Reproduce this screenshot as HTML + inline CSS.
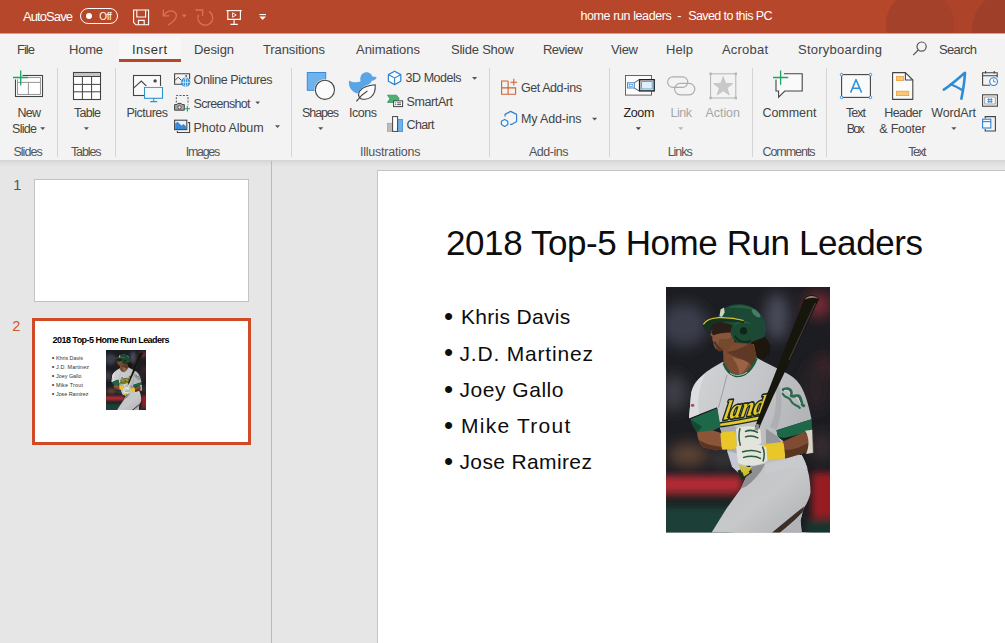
<!DOCTYPE html>
<html lang="en">
<head>
<meta charset="utf-8">
<title>home run leaders - PowerPoint</title>
<style>
html,body{margin:0;padding:0;overflow:hidden;}
body{width:1005px;height:643px;overflow:hidden;position:relative;background:#e6e6e6;font-family:"Liberation Sans",sans-serif;}
.t{position:absolute;white-space:nowrap;display:block;}
.abs{position:absolute;}
#titlebar{left:0;top:0;width:1005px;height:33px;background:#b7472a;overflow:hidden;}
#tabs{left:0;top:33px;width:1005px;height:29px;background:linear-gradient(#d79d8f 0,#d79d8f 1px,#f8f4f5 1px,#f7f4f5 4px,#f3f3f3 6px);}
#ribbon{left:0;top:62px;width:1005px;height:98px;background:#f3f3f3;}
#ribshadow{left:0;top:160px;width:1005px;height:7px;background:linear-gradient(#d3d3d3,#dedede 40%,#e6e6e6);}
.sep{position:absolute;top:68px;width:1px;height:89px;background:#d4d4d4;}
#tabactive{left:119px;top:38px;width:62px;height:21px;background:#f8f7f7;}
#tabline{left:119px;top:59px;width:62px;height:3px;background:#b7472a;}
#panediv{left:271px;top:161px;width:1px;height:483px;background:#bababa;}
#thumb1{left:34px;top:179px;width:213px;height:121px;background:#fff;border:1px solid #c3c3c3;box-sizing:content-box;}
#thumb2{left:32px;top:318px;width:213px;height:121px;background:#fff;border:3px solid #d04a27;}
#slide{left:377px;top:170px;width:627px;height:472px;background:#fff;border-left:1px solid #c4c4c4;border-top:1px solid #c4c4c4;}
.bl{position:absolute;border-radius:50%;background:#0d0d0d;}
svg{position:absolute;overflow:visible;}
</style>
</head>
<body>
<div class="abs" id="titlebar"></div>
<div class="abs" id="tabs"></div>
<div class="abs" id="ribbon"></div>
<div class="abs" id="ribshadow"></div>
<div class="abs" id="tabactive"></div>
<div class="abs" id="tabline"></div>
<div class="sep" style="left:57px"></div>
<div class="sep" style="left:115px"></div>
<div class="sep" style="left:291px"></div>
<div class="sep" style="left:489px"></div>
<div class="sep" style="left:609px"></div>
<div class="sep" style="left:752px"></div>
<div class="sep" style="left:826px"></div>
<div class="abs" id="panediv"></div>
<div class="abs" id="thumb1"></div>
<div class="abs" id="thumb2"></div>
<div class="abs" id="slide"></div>
<!-- ribbon icons group 1: slides, tables, images -->
<svg style="left:0;top:62px" width="300" height="98" viewBox="0 62 300 98" fill="none">
  <!-- New Slide -->
  <rect x="15.5" y="75.5" width="27" height="21" fill="#fdfdfd" stroke="#444" stroke-width="1.1"/>
  <rect x="17.6" y="77.6" width="22.8" height="16.8" fill="#fff" stroke="#8a8a8a" stroke-width="0.9"/>
  <path d="M17.6 82.4 H40.4 M28.4 82.4 V94.4" stroke="#8a8a8a" stroke-width="0.9"/>
  <rect x="12" y="70" width="10.5" height="9.5" fill="#f3f3f3"/>
  <path d="M20.7 70.4 V85.4 M13 77.5 H28" stroke="#1fa463" stroke-width="1.3"/>
  <path d="M40.2 127.2 H45.2 L42.7 129.9 Z" fill="#555"/>
  <!-- Table -->
  <rect x="73.5" y="72.5" width="27" height="27" fill="#fff" stroke="#444" stroke-width="1.1"/>
  <rect x="74" y="73" width="26" height="3.2" fill="#c4c4c4"/>
  <path d="M73.5 76.5 H100.5 M73.5 84.4 H100.5 M73.5 91.8 H100.5 M82.4 76.5 V99.5 M91.6 76.5 V99.5" stroke="#444" stroke-width="1"/>
  <path d="M83.9 127.2 H88.9 L86.4 129.9 Z" fill="#555"/>
  <!-- Pictures -->
  <rect x="133.5" y="75.5" width="27" height="20" fill="#fafafa" stroke="#444" stroke-width="1.1"/>
  <path d="M133.8 87.8 L141.3 81 L146.5 86.2" stroke="#444" stroke-width="1.1"/>
  <circle cx="155.1" cy="80.9" r="1.7" fill="#444"/>
  <rect x="144.5" y="87.3" width="18" height="11" fill="#f4f8fb" stroke="#2f96cc" stroke-width="1.1"/>
  <rect x="143" y="86" width="21" height="1" fill="#f3f3f3" stroke="none"/>
  <path d="M153.7 98.5 V101.6 M150.2 101.6 H157.2" stroke="#2f96cc" stroke-width="1.1"/>
  <!-- Online Pictures -->
  <path d="M182 84.2 H174.6 V73.8 H189.6 V79" stroke="#444" stroke-width="1.1"/>
  <path d="M174.8 80.6 L178.2 77.2 L181 80" stroke="#444" stroke-width="1"/>
  <circle cx="186.2" cy="75.9" r="0.9" fill="#444"/>
  <circle cx="185.6" cy="82.3" r="4.7" fill="#2b8fd6"/>
  <path d="M181.2 82.3 H190 M185.6 77.8 V86.8" stroke="#e8f3fb" stroke-width="0.8"/>
  <ellipse cx="185.6" cy="82.3" rx="2.1" ry="4.4" stroke="#e8f3fb" stroke-width="0.7"/>
  <!-- Screenshot -->
  <path d="M176.3 102.5 V95.5 H188 V104.5" stroke="#555" stroke-width="1" stroke-dasharray="2 1.4"/>
  <path d="M174.6 104.6 H177 L177.8 103.4 H181.2 L182 104.6 H184.3 V110.2 H174.6 Z" fill="#a9a9a9" stroke="#444" stroke-width="1"/>
  <circle cx="179.5" cy="107.3" r="1.7" fill="#e9e9e9" stroke="#444" stroke-width="0.9"/>
  <path d="M187.4 106 V111.4 M184.8 108.7 H190" stroke="#1fa463" stroke-width="1.1"/>
  <path d="M255.4 101.6 H260 L257.7 104.2 Z" fill="#555"/>
  <!-- Photo Album -->
  <path d="M177.4 131 V132.5 H189.6 V122.6 H188" stroke="#444" stroke-width="1.1"/>
  <rect x="174.6" y="120.2" width="12.2" height="9.4" fill="#eaf3fb" stroke="#444" stroke-width="1.1"/>
  <path d="M175.2 123.6 L177.6 121.8 L181.4 125.4 L183.6 124 L186.2 126.4 V129 H175.2 Z" fill="#3b8ad8"/>
  <path d="M275 125.2 H280 L277.5 128 Z" fill="#555"/>
</svg>

<!-- ribbon icons group 2: illustrations, add-ins -->
<svg style="left:295px;top:62px" width="320" height="98" viewBox="295 62 320 98" fill="none">
  <!-- Shapes -->
  <rect x="307.3" y="72.5" width="18.4" height="17.8" fill="#6fb3ec" stroke="#3a8bd8" stroke-width="1"/>
  <circle cx="324.9" cy="89.8" r="10.6" fill="#f3f3f3"/>
  <circle cx="324.9" cy="89.8" r="9.6" fill="#fbfbfb" stroke="#444" stroke-width="1.1"/>
  <path d="M318.1 127.2 H323.3 L320.7 130 Z" fill="#555"/>
  <!-- Icons : duck -->
  <path d="M349 80.4 C352 82.4 356 82.6 360.6 81.4 C359.4 77 361.6 72.4 366.4 72.2 C370.2 72.2 372 74.8 372.4 76.6 L376.6 77 C376.2 79.6 373.8 80.6 371.8 80.8 C371.2 82.6 370 83.6 368.6 84.4 C364 85.6 360 88.6 357.8 93.4 C353 92.6 348 88 349 80.4 Z" fill="#5aa5e6"/>
  <!-- leaf -->
  <path d="M360.2 98.4 C356.6 94 358.6 86.4 375.2 84.8 C376 96 368.8 101.4 360.2 98.4 Z" fill="#fbfbfb" stroke="#444" stroke-width="1.1"/>
  <path d="M356.4 101.4 C359.6 96.8 362.8 93.8 367.4 91" stroke="#444" stroke-width="1.1"/>
  <!-- 3D models cube -->
  <path d="M394.6 71.2 L400.8 74.6 V81.2 L394.6 84.6 L388.4 81.2 V74.6 Z" fill="#fbfdff" stroke="#2f82d2" stroke-width="1.2" stroke-linejoin="round"/>
  <path d="M388.6 74.8 L394.6 78 L400.6 74.8 M394.6 78 V84.4" stroke="#2f82d2" stroke-width="1.1"/>
  <path d="M472 77 H477.2 L474.6 79.8 Z" fill="#555"/>
  <!-- SmartArt -->
  <path d="M387.4 95.2 H396.6 L399.2 98.8 L396.6 102.4 H387.4 L390 98.8 Z" fill="#4fae72" stroke="#2f9658" stroke-width="0.8"/>
  <rect x="393.6" y="100.8" width="9" height="5.8" fill="#fbfbfb" stroke="#444" stroke-width="1"/>
  <path d="M395.2 102.8 H396.2 M397.2 102.8 H401 M395.2 104.6 H396.2 M397.2 104.6 H401" stroke="#444" stroke-width="0.9"/>
  <!-- Chart -->
  <rect x="387.4" y="123.2" width="5" height="8.2" fill="#bdbdbd" stroke="#9a9a9a" stroke-width="0.6"/>
  <rect x="397.6" y="119.6" width="5" height="11.8" fill="#6fb3ec" stroke="#3a8bd8" stroke-width="0.8"/>
  <rect x="392.6" y="116.6" width="5" height="14.8" fill="#fdfdfd" stroke="#444" stroke-width="1"/>
</svg>

<!-- ribbon icons group 3: add-ins, links, comments, text -->
<svg style="left:495px;top:62px" width="510" height="98" viewBox="495 62 510 98" fill="none">
  <!-- Get Add-ins -->
  <path d="M508.1 81 H501.6 V94.3 H515.6 V87.9 H501.6 M508.1 81 V94.3" stroke="#d4602f" stroke-width="1.1"/>
  <path d="M513.8 78.8 V85.6 M510.4 82.2 H517.2" stroke="#d4602f" stroke-width="1.1"/>
  <!-- My Add-ins -->
  <path d="M505 116.4 V114.4 L510.6 111.4 L516.6 114.4 V121.6 L511.6 124.4 H510" stroke="#2f82d2" stroke-width="1.2" stroke-linejoin="round"/>
  <path d="M504.6 119.4 L507.8 121.2 V124.6 L504.6 126.4 L501.4 124.6 V121.2 Z" stroke="#2f82d2" stroke-width="1.2" stroke-linejoin="round" fill="#f7fbff"/>
  <path d="M592 117.8 H597.2 L594.6 120.6 Z" fill="#555"/>
  <!-- Zoom -->
  <rect x="625.5" y="75.5" width="26" height="19.6" fill="#fbfbfb" stroke="#555" stroke-width="0.9"/>
  <path d="M634.3 82.8 L639.2 79.6 M634.3 88 L639.2 91" stroke="#444" stroke-width="0.9"/>
  <rect x="627.5" y="82.8" width="6.8" height="5.2" fill="#e4f2fb" stroke="#2f82d2" stroke-width="0.9"/>
  <rect x="629.2" y="84.4" width="3.4" height="2" fill="#fff" stroke="#2f82d2" stroke-width="0.6"/>
  <rect x="639.6" y="79.7" width="14.6" height="11.2" fill="#fbfbfb" stroke="#222" stroke-width="1.4"/>
  <rect x="641.6" y="81.6" width="10.6" height="7.4" fill="#dff0fb" stroke="#3a93d6" stroke-width="0.8"/>
  <path d="M635.8 127.2 H641 L638.4 130 Z" fill="#444"/>
  <!-- Link -->
  <rect x="667.6" y="76.8" width="20.2" height="10.6" rx="5.3" stroke="#adadad" stroke-width="1.2"/>
  <rect x="674.6" y="83.4" width="20.2" height="11.4" rx="5.7" stroke="#adadad" stroke-width="1.2" fill="none"/>
  <path d="M678.2 127.2 H683.4 L680.8 130 Z" fill="#b5b5b5"/>
  <!-- Action -->
  <rect x="710.6" y="73.8" width="25.2" height="24.2" stroke="#b3b3b3" stroke-width="1"/>
  <g fill="#b3b3b3"><rect x="709.4" y="72.6" width="2.4" height="2.4"/><rect x="734.6" y="72.6" width="2.4" height="2.4"/><rect x="709.4" y="96.8" width="2.4" height="2.4"/><rect x="734.6" y="96.8" width="2.4" height="2.4"/></g>
  <path d="M723.2 76.6 L725.6 83.4 L732.8 83.6 L727.1 88 L729.2 94.9 L723.2 90.8 L717.2 94.9 L719.3 88 L713.6 83.6 L720.8 83.4 Z" fill="#c9c9c9" stroke="#b9b9b9" stroke-width="0.6"/>
  <!-- Comment -->
  <path d="M776 73.8 H802.2 V91 H784.8 L778.6 97.2 V91 H776 Z" fill="#fafafa" stroke="#444" stroke-width="1.1"/>
  <rect x="772" y="70" width="12" height="9.6" fill="#f3f3f3"/>
  <path d="M780.6 70.4 V84.8 M773 77.5 H788.2" stroke="#1fa463" stroke-width="1.3"/>
  <!-- Text Box -->
  <rect x="841.6" y="74.6" width="28.8" height="22.8" fill="#fafafa" stroke="#444" stroke-width="1.1"/>
  <g fill="#fff" stroke="#2f82d2" stroke-width="0.9"><circle cx="841.6" cy="74.6" r="1.3"/><circle cx="870.4" cy="74.6" r="1.3"/><circle cx="841.6" cy="97.4" r="1.3"/><circle cx="870.4" cy="97.4" r="1.3"/></g>
  <path d="M850.6 92.6 L856 79.6 L861.6 92.6 M852.6 88.2 H859.6" stroke="#2f8fd8" stroke-width="1.5" stroke-linejoin="round"/>
  <!-- Header & Footer -->
  <path d="M892.6 72.6 H905.4 L912.8 80 V99.4 H892.6 Z" fill="#fbfbfb" stroke="#444" stroke-width="1.1" stroke-linejoin="round"/>
  <path d="M905.4 72.6 V80 H912.8" stroke="#444" stroke-width="1.1"/>
  <rect x="896.4" y="76.4" width="7" height="4.2" fill="#fac775" stroke="#ee9f3c" stroke-width="0.8"/>
  <rect x="896.4" y="91.2" width="12.4" height="4.4" fill="#fac775" stroke="#ee9f3c" stroke-width="0.8"/>
  <!-- WordArt -->
  <path d="M943.8 89.6 C950 86 961 76 965 72.8 C964.6 80 962.8 92 961.4 98.8" stroke="#2b8dd6" stroke-width="2.6" stroke-linecap="round" stroke-linejoin="round"/>
  <path d="M950.8 84.2 C955 86 959 88 962.6 90.2" stroke="#2b8dd6" stroke-width="2.3" stroke-linecap="round"/>
  <path d="M951.3 127.2 H956.5 L953.9 130 Z" fill="#555"/>
  <!-- Date & time -->
  <path d="M990 85.2 H982.6 V72.8 H997.2 V77.4" stroke="#444" stroke-width="1.1"/>
  <path d="M982.6 75.8 H997.2 M985.6 71 V73.4 M994.2 71 V73.4" stroke="#444" stroke-width="1.1"/>
  <circle cx="993.6" cy="81.6" r="3.9" fill="#f7fbff" stroke="#2f82d2" stroke-width="1.1"/>
  <path d="M993.6 79.4 V81.8 H995.6" stroke="#2f82d2" stroke-width="0.9"/>
  <!-- Slide number -->
  <rect x="982.6" y="94.8" width="14.8" height="11.4" fill="#fafafa" stroke="#444" stroke-width="1.1"/>
  <rect x="984.8" y="97" width="10.4" height="7" fill="#fff" stroke="#777" stroke-width="0.7"/>
  <path d="M988.8 98.2 V103 M991.2 98.2 V103 M987.4 99.6 H992.6 M987.4 101.6 H992.6" stroke="#2f82d2" stroke-width="0.9"/>
  <!-- Object -->
  <path d="M985.2 118.6 V116.6 H995.4 V131 H985.2 V129" stroke="#444" stroke-width="1.1"/>
  <rect x="982.6" y="119.2" width="8.2" height="8.8" fill="#f7fbff" stroke="#2f82d2" stroke-width="1.1"/>
  <path d="M982.6 121.6 H990.8" stroke="#2f82d2" stroke-width="1.1"/>
</svg>
<!-- search icon -->
<svg style="left:911px;top:40px" width="18" height="18" viewBox="0 0 18 18" fill="none" stroke="#555" stroke-width="1.2">
  <circle cx="10.6" cy="6.6" r="4.6"/>
  <path d="M7.2 10 L2.2 15.2"/>
</svg>

<!-- title bar icons -->
<div class="abs" style="left:80px;top:8px;width:36px;height:14px;border:1.3px solid #fff;border-radius:9px;"></div>
<div class="abs" style="left:85.5px;top:13px;width:6px;height:6px;border-radius:3px;background:#fff;"></div>
<svg style="left:133px;top:9px" width="17" height="17" viewBox="0 0 17 17" fill="none" stroke="#fff" stroke-width="1.1">
  <path d="M0.6 1 H15.6 V15.8 H3 L0.6 13.4 Z"/>
  <path d="M3.8 1 V8 H12.6 V1"/>
  <path d="M5.4 15.8 V11.4 H11.2 V15.8"/>
</svg>
<svg style="left:158px;top:4px" width="60" height="26" viewBox="158 4 60 26" fill="none" stroke="#e26f52" stroke-width="1.3">
  <path d="M163.3 9.4 V15.8 H169.6"/>
  <path d="M163.8 15.4 C166 11.6 170 9.8 173.4 11.4 C177.4 13.4 177.4 17.6 173.4 21 L168.2 25.2"/>
  <path d="M181.6 14.6 H186.8 L184.2 17.4 Z" fill="#e26f52" stroke="none"/>
  <path d="M195.4 10 H202.6 V16"/>
  <path d="M209 11.4 A7.4 7.4 0 1 1 198.6 14.6"/>
</svg>
<svg style="left:226px;top:9px" width="17" height="17" viewBox="0 0 17 17" fill="none" stroke="#fff" stroke-width="1.1">
  <path d="M0.4 1.6 H15.8"/>
  <path d="M1.8 1.6 V10.4 H14.4 V1.6"/>
  <path d="M8.1 10.4 V15.4 M4.4 15.4 H11.8"/>
  <path d="M6.6 3.8 L10.2 6 L6.6 8.2 Z" stroke-width="0.9"/>
</svg>
<svg style="left:259px;top:13px" width="8" height="8" viewBox="0 0 8 8">
  <rect x="0.4" y="1" width="6.6" height="1.1" fill="#fff"/>
  <path d="M0.4 3.6 H7 L3.7 7 Z" fill="#fff"/>
</svg>
<!-- title decoration -->
<div class="abs" style="left:860px;top:0;width:145px;height:33px;overflow:hidden;">
<svg style="left:0;top:0" width="145" height="33" viewBox="860 0 145 33">
  <circle cx="975" cy="-10" r="62" fill="#ad442a"/>
  <circle cx="920" cy="24" r="34" fill="#a3412a"/>
  <circle cx="1012" cy="30" r="40" fill="#9f3f29"/>
</svg>
</div>


<!-- photo (drawn with vector shapes) -->
<svg style="left:666px;top:287px" width="164" height="245.5" viewBox="0 0 164 246" preserveAspectRatio="none">
  <defs>
    <filter id="bl8" x="-50%" y="-50%" width="200%" height="200%"><feGaussianBlur stdDeviation="7"/></filter>
    <filter id="bl4" x="-50%" y="-50%" width="200%" height="200%"><feGaussianBlur stdDeviation="3.5"/></filter>
    <filter id="bl1" x="-20%" y="-20%" width="140%" height="140%"><feGaussianBlur stdDeviation="0.7"/></filter>
    <filter id="bl2" x="-20%" y="-20%" width="140%" height="140%"><feGaussianBlur stdDeviation="1.6"/></filter>
    <linearGradient id="jer" x1="0" y1="0" x2="1" y2="0.3">
      <stop offset="0" stop-color="#d2d3d5"/><stop offset="0.55" stop-color="#c6c7ca"/><stop offset="1" stop-color="#b4b5b9"/>
    </linearGradient>
    <linearGradient id="pan" x1="0" y1="0" x2="1" y2="1">
      <stop offset="0" stop-color="#bfc0c3"/><stop offset="0.55" stop-color="#c7c8ca"/><stop offset="1" stop-color="#aeafb2"/>
    </linearGradient>
    <clipPath id="pc"><rect x="0" y="0" width="164" height="246"/></clipPath>
  </defs>
<g clip-path="url(#pc)">
      <rect x="0" y="0" width="164" height="246" fill="#1c1d22"/>
      <!-- blurred background -->
      <g filter="url(#bl8)">
        <ellipse cx="18" cy="38" rx="24" ry="22" fill="#3b3e4b"/>
        <ellipse cx="111" cy="30" rx="12" ry="24" fill="#4a4c5a"/>
        <ellipse cx="152" cy="18" rx="14" ry="12" fill="#7a2a34"/>
        <ellipse cx="158" cy="82" rx="10" ry="14" fill="#4a242b"/>
        <ellipse cx="8" cy="106" rx="14" ry="18" fill="#3c3e47"/>
        <ellipse cx="150" cy="100" rx="14" ry="25" fill="#2c2327"/>
        <ellipse cx="22" cy="168" rx="20" ry="12" fill="#5c4335"/>
        <ellipse cx="58" cy="172" rx="12" ry="9" fill="#3d3a3c"/>
        <ellipse cx="156" cy="160" rx="10" ry="14" fill="#3a2d30"/>
      </g>
      <g filter="url(#bl4)">
        <rect x="-10" y="189" width="86" height="17" fill="#b02c35"/>
        <rect x="-10" y="207" width="80" height="12" fill="#1a2422"/>
        <rect x="-10" y="221" width="74" height="34" fill="#1f4038"/>
        <rect x="146" y="186" width="30" height="46" fill="#961a24"/>
        <rect x="140" y="234" width="34" height="20" fill="#14362e"/>
      </g>
      <g filter="url(#bl1)">
      <!-- hair -->
      <path d="M82 47 C92 45 101 49 103.5 58 C105.5 65 102 71 96 71.5 C91 70 87 66 85 60 Z" fill="#1b120d"/>
      <!-- neck -->
      <path d="M57 62 L57.6 77 C61 88 76 93 86 81 L91 72.5 L88 57 L66 55 Z" fill="#7d4c33"/>
      <path d="M66 70 C70 76 74 82 73 88 C78 86 82 80 84 72 C78 74 72 73 66 70 Z" fill="#9a6445"/>
      <path d="M60 65 C70 64 78 60 84 56 L88 58 L90.6 72 L86 79 C80 72 68 71 60 65 Z" fill="#5e3826"/>
      <!-- face -->
      <path d="M50 37 L46 43 L44.3 47.8 L46.4 50 L46.2 52.5 L47.2 54.5 L47.6 58 L49.5 61.5 L53.5 64.5 L62 63 L68 57 L69 38 Z" fill="#87563b"/>
      <path d="M44 36 L70 34 L69 46 C62 45 54 46 47.5 48.4 L45.4 46 L46.4 43 Z" fill="#2c1b15"/>
      <path d="M53 52 C58 53 63 52 67 50 L68 57 L62 63 L54 64.5 L50 62 C52 59 53 56 53 52 Z" fill="#75482f"/>
      <path d="M47.4 55 C49 58 50 60.6 53.6 64.4 L58 63.6 C54 61 51 58 49.6 54.4 Z" fill="#553526"/>
      <!-- helmet -->
      <path d="M51 34 C52 23 62 17 74 17.3 C88 17.5 99.5 28 100 42 C100 46 99 49 97.5 50.5 C92 52.5 88 54 84 56 L70 50 L66 38 Z" fill="#1b4a34"/>
      <path d="M62 21 C70 16.5 84 17.5 92 25 C86 21.5 72 20.5 62 21 Z" fill="#296043"/>
      <ellipse cx="90" cy="26.5" rx="5.5" ry="2.4" transform="rotate(42 90 26.5)" fill="#5d927a" opacity="0.7"/>
      <circle cx="76.5" cy="44.8" r="11.8" fill="#1b4833"/>
      <path d="M66.5 39 C70 33.5 80 32.5 85.5 37.5 C80 35 71 35.5 66.5 39 Z" fill="#2f6a4c"/>
      <circle cx="77.5" cy="44" r="3.6" fill="#0d2519"/>
      <path d="M69 49 C71 54 78 57 85 53.5" stroke="#0f2c1e" stroke-width="1.6" fill="none"/>
      <!-- brim -->
      <path d="M37 38.2 C38 34 44 31 52 30.4 C60 30 70 31 78 33.6 L78 36.4 C68 34.4 58 34.4 50.5 36.2 C45.5 38 42.4 42 43.6 46.6 C40 44.4 36.8 41.4 37 38.2 Z" fill="#123121"/>
      <path d="M37.4 37.4 C40 33.2 46 31 53 30.7 C62 30.4 70 31.4 77.6 33.6" stroke="#d9c431" stroke-width="1.2" fill="none"/>
      <path d="M54.5 22.5 L58 20.6 L58.6 25.6 L56 30 L53.6 29.4 Z" fill="#cfd5bd"/>
      <!-- jersey torso -->
      <path d="M57 75 C50 79 42 83 36 89 C30 94 26 100 25 108 L23 131.5 L51 120.5 L54 141 L62 165 L72 182 L118 176 L136 170 L112 150 L110.5 143.5 L145.5 132.5 C143 120 140 108 134 98 C130 92 124 88 118 85 L90.5 71 C86 82 76 92 68 89.4 C63 87 60 82 57 75 Z" fill="url(#jer)"/>
      <path d="M40 86 C32 92 26 100 25 108 L23 131.5 L33 127.5 C31 114 33 98 40 86 Z" fill="#dcdddf"/>
      <path d="M100 142 L112 150 L124 170 L100 168 Z" fill="#96979b"/>
      <path d="M54 141 L62 165 L72 182 L88 178 L84 150 L66 138 Z" fill="#a9aaae"/>
      <path d="M112 96 C118 110 116 130 110.5 143.5 L104 140 C110 128 112 110 108 96 Z" fill="#aeafb3"/>
      <path d="M61 88 C58 100 55 112 52.4 121" stroke="#a4a5a9" stroke-width="1.2" fill="none"/>
      <!-- collar -->
      <path d="M57.6 76.4 C60 82.4 64 87.6 69.4 89 C76 90 82 86 85.4 81 C87.6 78 89.4 74.6 90.4 71.6" stroke="#1d5a3c" stroke-width="2.6" fill="none"/>
      <path d="M64 86 C68 89.4 75 89.6 81 85.4" stroke="#dfe3df" stroke-width="0.8" fill="none"/>
      <!-- sleeve patch -->
      <g transform="rotate(36 127 110)" fill="none" stroke="#2e6a4d" stroke-linecap="round">
        <path d="M115 110 C118 105 122 105 124 109 C126 113 129 105 132 106 C136 107 138 112 141 111" stroke-width="3"/>
        <path d="M117 113.6 C121 116 125 112 128 114.6 C132 117 136 114 139 115" stroke-width="2.2"/>
        <path d="M116.4 110 C119 107 121.4 107.4 123 110 M130 108.4 C133 108 135 110.4 137 111" stroke="#d5dad6" stroke-width="1"/>
      </g>
      <circle cx="26.6" cy="118.6" r="1.7" fill="#b8475a"/>
      <!-- chest script -->
      <path d="M55 138 C68 136.4 80 134 92 131.4" fill="none" stroke="#1a2a1b" stroke-width="5.4" stroke-linecap="round"/>
      <path d="M55 138 C68 136.4 80 134 92 131.4" fill="none" stroke="#e3c832" stroke-width="2.6" stroke-linecap="round"/>
      <text x="57" y="133" transform="translate(57 133) rotate(-9) skewX(-20) translate(-57 -133)" style="font-family:'Liberation Serif',serif;font-style:italic;font-weight:bold;font-size:26px" textLength="41" lengthAdjust="spacingAndGlyphs" fill="#e3c832" stroke="#1a2a1b" stroke-width="3.4" paint-order="stroke" stroke-linejoin="round">land</text>
      <!-- pants -->
      <path d="M85 179 L118 172 L135.5 168 C141 178 144.5 190 144.5 206 C143 214 139 220 137.5 222 L134.5 234 L135.5 247 L45 247 L60.5 222 L75 202 Z" fill="url(#pan)"/>
      <path d="M138 220 C128 228 116 238 105 247 L113 247 C122 240 131 232 136.4 226 Z" fill="#3b2d27"/>
      <path d="M136.4 226 C131 232 122 240 113 247 L136 247 L134.5 234 Z" fill="#b2b3b6"/>
      <path d="M98 178 C110 176 124 172 135.5 168 C138 172 140 177 141.6 182 C128 180 112 182 100 188 Z" fill="#c9cacd"/>
      <path d="M85 180 L99 177 C96 184 90 192 80 200 L75 202 Z" fill="#8e8f93"/>
      <!-- jersey tail + belt -->
      <path d="M61 164 L80 169 L80 184 L72 186 L66 180 Z" fill="#c4c8d6"/>
      <path d="M71.5 184 L84 178.6 L86 186 L75.6 193.4 Z" fill="#222d1e"/>
      <path d="M76 184.4 L82 181.6 L83.4 186.4 L78 190 Z" fill="#d3ba2e"/>
      <!-- bat -->
      <path d="M138 13 C138.6 8 150 6.4 152.6 11.4 L152.6 13 L123.3 76 L107.4 109 L95 137 L89.4 152 L85 152 L90.2 137 L100.4 109 L113.3 76 Z" fill="#16130f"/>
      <path d="M139 12.6 C140 8.6 149.6 7.4 152 11.6 C148 10 143 10.6 139 12.6 Z" fill="#8a8272"/>
      <path d="M149.4 16 L123 73" stroke="#3b3731" stroke-width="1.4" fill="none"/>
      <!-- left arm (viewer left) -->
      <path d="M24.5 132.5 L51.3 121.5 L54.6 140.4 L46 144.4 L31 145.8 Z" fill="#1e6848"/>
      <path d="M24.5 132.5 L26 138 L31 145.8 L36 140 Z" fill="#154a33"/>
      <path d="M31 145.6 L46 143.6 L56 146.6 L57.6 163 L50 163.6 L37 160.6 C33 156 31 150 31 145.6 Z" fill="#8a5538"/>
      <path d="M33 153 C40 158 50 160 57.4 160 L57.6 163 L50 163.6 L37 160.6 Z" fill="#5c3624"/>
      <rect x="55" y="145" width="15.4" height="17.6" rx="2.4" transform="rotate(-5 62 154)" fill="#e9c62b"/>
      <!-- right arm -->
      <path d="M110.5 143.5 L145.5 132.5 L146.4 146 L138 146.4 L118 151.4 L112 150 Z" fill="#1e6848"/>
      <path d="M116 155.4 L138 145.4 L143.4 150 L142 165 L119.4 171.8 Z" fill="#7f4b31"/>
      <path d="M118 163 C126 164 136 160 142.6 156 L142 165 L119.4 171.8 Z" fill="#5a3423"/>
      <path d="M139 144 L146.6 143 L147.4 166 L140 167.4 C143.4 160 143.6 151 139 144 Z" fill="#d9d3c5"/>
      <path d="M146.6 143 L147.4 166" stroke="#3a3a36" stroke-width="0.8"/>
      <rect x="97.6" y="156.4" width="21" height="16.4" rx="2.4" transform="rotate(-7 108 165)" fill="#e9c62b"/>
      <!-- gloves -->
      <path d="M70 142.4 C76 138.6 88 138.6 94.4 142.6 L95.4 156.4 C90 160.4 78 161.4 71 160 Z" fill="#e3e4dc"/>
      <path d="M70 160 C80 156.6 94 156.6 100.4 160.6 L101.4 174 C94 179.4 80 180.4 72 176 Z" fill="#e3e4dc"/>
      <g stroke="#2b5a3a" stroke-width="1.5" fill="none">
        <path d="M74 141.6 C72.6 147 72.6 153 74.4 159"/>
        <path d="M79 145 C83 143 88 143.6 92 146"/>
        <path d="M79 150.4 C83 148.6 88 149 92.4 151.4"/>
        <path d="M76 165.4 C82 163 90 163.4 95 166"/>
        <path d="M77 171 C83 169 90 169.4 95 172"/>
        <path d="M96.4 160 C98.4 164 98.6 170 97 175"/>
      </g>
      <path d="M88.4 143 L90.4 137 L93.6 138 L92 144 Z" fill="#8c8e90"/>
      <path d="M72 176 C74 179 80 181 86 180 L84 184 L75.6 186 Z" fill="#cfc23a"/>
      </g>
    </g>

</svg>
<!-- thumbnail photo -->
<svg style="left:106px;top:350px" width="40" height="60" viewBox="0 0 164 246" preserveAspectRatio="none">
<g clip-path="url(#pc)">
      <rect x="0" y="0" width="164" height="246" fill="#1c1d22"/>
      <!-- blurred background -->
      <g filter="url(#bl8)">
        <ellipse cx="18" cy="38" rx="24" ry="22" fill="#3b3e4b"/>
        <ellipse cx="111" cy="30" rx="12" ry="24" fill="#4a4c5a"/>
        <ellipse cx="152" cy="18" rx="14" ry="12" fill="#7a2a34"/>
        <ellipse cx="158" cy="82" rx="10" ry="14" fill="#4a242b"/>
        <ellipse cx="8" cy="106" rx="14" ry="18" fill="#3c3e47"/>
        <ellipse cx="150" cy="100" rx="14" ry="25" fill="#2c2327"/>
        <ellipse cx="22" cy="168" rx="20" ry="12" fill="#5c4335"/>
        <ellipse cx="58" cy="172" rx="12" ry="9" fill="#3d3a3c"/>
        <ellipse cx="156" cy="160" rx="10" ry="14" fill="#3a2d30"/>
      </g>
      <g filter="url(#bl4)">
        <rect x="-10" y="189" width="86" height="17" fill="#b02c35"/>
        <rect x="-10" y="207" width="80" height="12" fill="#1a2422"/>
        <rect x="-10" y="221" width="74" height="34" fill="#1f4038"/>
        <rect x="146" y="186" width="30" height="46" fill="#961a24"/>
        <rect x="140" y="234" width="34" height="20" fill="#14362e"/>
      </g>
      <g filter="url(#bl1)">
      <!-- hair -->
      <path d="M82 47 C92 45 101 49 103.5 58 C105.5 65 102 71 96 71.5 C91 70 87 66 85 60 Z" fill="#1b120d"/>
      <!-- neck -->
      <path d="M57 62 L57.6 77 C61 88 76 93 86 81 L91 72.5 L88 57 L66 55 Z" fill="#7d4c33"/>
      <path d="M66 70 C70 76 74 82 73 88 C78 86 82 80 84 72 C78 74 72 73 66 70 Z" fill="#9a6445"/>
      <path d="M60 65 C70 64 78 60 84 56 L88 58 L90.6 72 L86 79 C80 72 68 71 60 65 Z" fill="#5e3826"/>
      <!-- face -->
      <path d="M50 37 L46 43 L44.3 47.8 L46.4 50 L46.2 52.5 L47.2 54.5 L47.6 58 L49.5 61.5 L53.5 64.5 L62 63 L68 57 L69 38 Z" fill="#87563b"/>
      <path d="M44 36 L70 34 L69 46 C62 45 54 46 47.5 48.4 L45.4 46 L46.4 43 Z" fill="#2c1b15"/>
      <path d="M53 52 C58 53 63 52 67 50 L68 57 L62 63 L54 64.5 L50 62 C52 59 53 56 53 52 Z" fill="#75482f"/>
      <path d="M47.4 55 C49 58 50 60.6 53.6 64.4 L58 63.6 C54 61 51 58 49.6 54.4 Z" fill="#553526"/>
      <!-- helmet -->
      <path d="M51 34 C52 23 62 17 74 17.3 C88 17.5 99.5 28 100 42 C100 46 99 49 97.5 50.5 C92 52.5 88 54 84 56 L70 50 L66 38 Z" fill="#1b4a34"/>
      <path d="M62 21 C70 16.5 84 17.5 92 25 C86 21.5 72 20.5 62 21 Z" fill="#296043"/>
      <ellipse cx="90" cy="26.5" rx="5.5" ry="2.4" transform="rotate(42 90 26.5)" fill="#5d927a" opacity="0.7"/>
      <circle cx="76.5" cy="44.8" r="11.8" fill="#1b4833"/>
      <path d="M66.5 39 C70 33.5 80 32.5 85.5 37.5 C80 35 71 35.5 66.5 39 Z" fill="#2f6a4c"/>
      <circle cx="77.5" cy="44" r="3.6" fill="#0d2519"/>
      <path d="M69 49 C71 54 78 57 85 53.5" stroke="#0f2c1e" stroke-width="1.6" fill="none"/>
      <!-- brim -->
      <path d="M37 38.2 C38 34 44 31 52 30.4 C60 30 70 31 78 33.6 L78 36.4 C68 34.4 58 34.4 50.5 36.2 C45.5 38 42.4 42 43.6 46.6 C40 44.4 36.8 41.4 37 38.2 Z" fill="#123121"/>
      <path d="M37.4 37.4 C40 33.2 46 31 53 30.7 C62 30.4 70 31.4 77.6 33.6" stroke="#d9c431" stroke-width="1.2" fill="none"/>
      <path d="M54.5 22.5 L58 20.6 L58.6 25.6 L56 30 L53.6 29.4 Z" fill="#cfd5bd"/>
      <!-- jersey torso -->
      <path d="M57 75 C50 79 42 83 36 89 C30 94 26 100 25 108 L23 131.5 L51 120.5 L54 141 L62 165 L72 182 L118 176 L136 170 L112 150 L110.5 143.5 L145.5 132.5 C143 120 140 108 134 98 C130 92 124 88 118 85 L90.5 71 C86 82 76 92 68 89.4 C63 87 60 82 57 75 Z" fill="url(#jer)"/>
      <path d="M40 86 C32 92 26 100 25 108 L23 131.5 L33 127.5 C31 114 33 98 40 86 Z" fill="#dcdddf"/>
      <path d="M100 142 L112 150 L124 170 L100 168 Z" fill="#96979b"/>
      <path d="M54 141 L62 165 L72 182 L88 178 L84 150 L66 138 Z" fill="#a9aaae"/>
      <path d="M112 96 C118 110 116 130 110.5 143.5 L104 140 C110 128 112 110 108 96 Z" fill="#aeafb3"/>
      <path d="M61 88 C58 100 55 112 52.4 121" stroke="#a4a5a9" stroke-width="1.2" fill="none"/>
      <!-- collar -->
      <path d="M57.6 76.4 C60 82.4 64 87.6 69.4 89 C76 90 82 86 85.4 81 C87.6 78 89.4 74.6 90.4 71.6" stroke="#1d5a3c" stroke-width="2.6" fill="none"/>
      <path d="M64 86 C68 89.4 75 89.6 81 85.4" stroke="#dfe3df" stroke-width="0.8" fill="none"/>
      <!-- sleeve patch -->
      <g transform="rotate(36 127 110)" fill="none" stroke="#2e6a4d" stroke-linecap="round">
        <path d="M115 110 C118 105 122 105 124 109 C126 113 129 105 132 106 C136 107 138 112 141 111" stroke-width="3"/>
        <path d="M117 113.6 C121 116 125 112 128 114.6 C132 117 136 114 139 115" stroke-width="2.2"/>
        <path d="M116.4 110 C119 107 121.4 107.4 123 110 M130 108.4 C133 108 135 110.4 137 111" stroke="#d5dad6" stroke-width="1"/>
      </g>
      <circle cx="26.6" cy="118.6" r="1.7" fill="#b8475a"/>
      <!-- chest script -->
      <path d="M55 138 C68 136.4 80 134 92 131.4" fill="none" stroke="#1a2a1b" stroke-width="5.4" stroke-linecap="round"/>
      <path d="M55 138 C68 136.4 80 134 92 131.4" fill="none" stroke="#e3c832" stroke-width="2.6" stroke-linecap="round"/>
      <text x="57" y="133" transform="translate(57 133) rotate(-9) skewX(-20) translate(-57 -133)" style="font-family:'Liberation Serif',serif;font-style:italic;font-weight:bold;font-size:26px" textLength="41" lengthAdjust="spacingAndGlyphs" fill="#e3c832" stroke="#1a2a1b" stroke-width="3.4" paint-order="stroke" stroke-linejoin="round">land</text>
      <!-- pants -->
      <path d="M85 179 L118 172 L135.5 168 C141 178 144.5 190 144.5 206 C143 214 139 220 137.5 222 L134.5 234 L135.5 247 L45 247 L60.5 222 L75 202 Z" fill="url(#pan)"/>
      <path d="M138 220 C128 228 116 238 105 247 L113 247 C122 240 131 232 136.4 226 Z" fill="#3b2d27"/>
      <path d="M136.4 226 C131 232 122 240 113 247 L136 247 L134.5 234 Z" fill="#b2b3b6"/>
      <path d="M98 178 C110 176 124 172 135.5 168 C138 172 140 177 141.6 182 C128 180 112 182 100 188 Z" fill="#c9cacd"/>
      <path d="M85 180 L99 177 C96 184 90 192 80 200 L75 202 Z" fill="#8e8f93"/>
      <!-- jersey tail + belt -->
      <path d="M61 164 L80 169 L80 184 L72 186 L66 180 Z" fill="#c4c8d6"/>
      <path d="M71.5 184 L84 178.6 L86 186 L75.6 193.4 Z" fill="#222d1e"/>
      <path d="M76 184.4 L82 181.6 L83.4 186.4 L78 190 Z" fill="#d3ba2e"/>
      <!-- bat -->
      <path d="M138 13 C138.6 8 150 6.4 152.6 11.4 L152.6 13 L123.3 76 L107.4 109 L95 137 L89.4 152 L85 152 L90.2 137 L100.4 109 L113.3 76 Z" fill="#16130f"/>
      <path d="M139 12.6 C140 8.6 149.6 7.4 152 11.6 C148 10 143 10.6 139 12.6 Z" fill="#8a8272"/>
      <path d="M149.4 16 L123 73" stroke="#3b3731" stroke-width="1.4" fill="none"/>
      <!-- left arm (viewer left) -->
      <path d="M24.5 132.5 L51.3 121.5 L54.6 140.4 L46 144.4 L31 145.8 Z" fill="#1e6848"/>
      <path d="M24.5 132.5 L26 138 L31 145.8 L36 140 Z" fill="#154a33"/>
      <path d="M31 145.6 L46 143.6 L56 146.6 L57.6 163 L50 163.6 L37 160.6 C33 156 31 150 31 145.6 Z" fill="#8a5538"/>
      <path d="M33 153 C40 158 50 160 57.4 160 L57.6 163 L50 163.6 L37 160.6 Z" fill="#5c3624"/>
      <rect x="55" y="145" width="15.4" height="17.6" rx="2.4" transform="rotate(-5 62 154)" fill="#e9c62b"/>
      <!-- right arm -->
      <path d="M110.5 143.5 L145.5 132.5 L146.4 146 L138 146.4 L118 151.4 L112 150 Z" fill="#1e6848"/>
      <path d="M116 155.4 L138 145.4 L143.4 150 L142 165 L119.4 171.8 Z" fill="#7f4b31"/>
      <path d="M118 163 C126 164 136 160 142.6 156 L142 165 L119.4 171.8 Z" fill="#5a3423"/>
      <path d="M139 144 L146.6 143 L147.4 166 L140 167.4 C143.4 160 143.6 151 139 144 Z" fill="#d9d3c5"/>
      <path d="M146.6 143 L147.4 166" stroke="#3a3a36" stroke-width="0.8"/>
      <rect x="97.6" y="156.4" width="21" height="16.4" rx="2.4" transform="rotate(-7 108 165)" fill="#e9c62b"/>
      <!-- gloves -->
      <path d="M70 142.4 C76 138.6 88 138.6 94.4 142.6 L95.4 156.4 C90 160.4 78 161.4 71 160 Z" fill="#e3e4dc"/>
      <path d="M70 160 C80 156.6 94 156.6 100.4 160.6 L101.4 174 C94 179.4 80 180.4 72 176 Z" fill="#e3e4dc"/>
      <g stroke="#2b5a3a" stroke-width="1.5" fill="none">
        <path d="M74 141.6 C72.6 147 72.6 153 74.4 159"/>
        <path d="M79 145 C83 143 88 143.6 92 146"/>
        <path d="M79 150.4 C83 148.6 88 149 92.4 151.4"/>
        <path d="M76 165.4 C82 163 90 163.4 95 166"/>
        <path d="M77 171 C83 169 90 169.4 95 172"/>
        <path d="M96.4 160 C98.4 164 98.6 170 97 175"/>
      </g>
      <path d="M88.4 143 L90.4 137 L93.6 138 L92 144 Z" fill="#8c8e90"/>
      <path d="M72 176 C74 179 80 181 86 180 L84 184 L75.6 186 Z" fill="#cfc23a"/>
      </g>
    </g>

</svg>

<span class="t" id="t0" style="left:23px;top:10.00px;font-size:13px;line-height:13px;color:#fff;letter-spacing:-0.911px;">AutoSave</span>
<span class="t" id="t1" style="left:99.2px;top:12.00px;font-size:10px;line-height:10px;color:#fff;letter-spacing:-0.278px;">Off</span>
<span class="t" id="t2" style="left:580.5px;top:10.00px;font-size:12.5px;line-height:12.5px;color:#fff;letter-spacing:-0.399px;">home run leaders</span>
<span class="t" id="t3" style="left:677.3px;top:10.00px;font-size:12.5px;line-height:12.5px;color:#fff;letter-spacing:0.000px;">-</span>
<span class="t" id="t4" style="left:688.2px;top:10.00px;font-size:12.5px;line-height:12.5px;color:#fff;letter-spacing:-0.587px;">Saved to this PC</span>
<span class="t" id="t5" style="left:17px;top:43.00px;font-size:13px;line-height:13px;color:#444;letter-spacing:-0.984px;">File</span>
<span class="t" id="t6" style="left:69px;top:43.00px;font-size:13px;line-height:13px;color:#444;letter-spacing:-0.229px;">Home</span>
<span class="t" id="t7" style="left:194px;top:43.00px;font-size:13px;line-height:13px;color:#444;letter-spacing:-0.094px;">Design</span>
<span class="t" id="t8" style="left:263px;top:43.00px;font-size:13px;line-height:13px;color:#444;letter-spacing:-0.111px;">Transitions</span>
<span class="t" id="t9" style="left:356px;top:43.00px;font-size:13px;line-height:13px;color:#444;letter-spacing:-0.035px;">Animations</span>
<span class="t" id="t10" style="left:451px;top:43.00px;font-size:13px;line-height:13px;color:#444;letter-spacing:-0.227px;">Slide Show</span>
<span class="t" id="t11" style="left:543px;top:43.00px;font-size:13px;line-height:13px;color:#444;letter-spacing:-0.525px;">Review</span>
<span class="t" id="t12" style="left:611px;top:43.00px;font-size:13px;line-height:13px;color:#444;letter-spacing:-0.318px;">View</span>
<span class="t" id="t13" style="left:666px;top:43.00px;font-size:13px;line-height:13px;color:#444;letter-spacing:0.083px;">Help</span>
<span class="t" id="t14" style="left:722px;top:43.00px;font-size:13px;line-height:13px;color:#444;letter-spacing:0.198px;">Acrobat</span>
<span class="t" id="t15" style="left:798px;top:43.00px;font-size:13px;line-height:13px;color:#444;letter-spacing:0.254px;">Storyboarding</span>
<span class="t" id="t16" style="left:939px;top:43.00px;font-size:13px;line-height:13px;color:#444;letter-spacing:-0.641px;">Search</span>
<span class="t" id="t17" style="left:132px;top:43.00px;font-size:13px;line-height:13px;color:#333;letter-spacing:0.497px;">Insert</span>
<span class="t" id="t18" style="left:17.5px;top:107.00px;font-size:12.5px;line-height:12.5px;color:#444;letter-spacing:-0.758px;">New</span>
<span class="t" id="t19" style="left:12px;top:123.00px;font-size:12.5px;line-height:12.5px;color:#444;letter-spacing:-0.699px;">Slide</span>
<span class="t" id="t20" style="left:74px;top:107.00px;font-size:12.5px;line-height:12.5px;color:#444;letter-spacing:-0.723px;">Table</span>
<span class="t" id="t21" style="left:126.5px;top:107.00px;font-size:12.5px;line-height:12.5px;color:#444;letter-spacing:-0.522px;">Pictures</span>
<span class="t" id="t22" style="left:193.6px;top:74.00px;font-size:12.5px;line-height:12.5px;color:#444;letter-spacing:-0.412px;">Online Pictures</span>
<span class="t" id="t23" style="left:193.6px;top:98.00px;font-size:12.5px;line-height:12.5px;color:#444;letter-spacing:-0.693px;">Screenshot</span>
<span class="t" id="t24" style="left:193.6px;top:122.00px;font-size:12.5px;line-height:12.5px;color:#444;letter-spacing:-0.089px;">Photo Album</span>
<span class="t" id="t25" style="left:302px;top:107.00px;font-size:12.5px;line-height:12.5px;color:#444;letter-spacing:-1.081px;">Shapes</span>
<span class="t" id="t26" style="left:349px;top:107.00px;font-size:12.5px;line-height:12.5px;color:#444;letter-spacing:-0.473px;">Icons</span>
<span class="t" id="t27" style="left:405.6px;top:72.00px;font-size:12.5px;line-height:12.5px;color:#444;letter-spacing:-0.469px;">3D Models</span>
<span class="t" id="t28" style="left:406.6px;top:96.00px;font-size:12.5px;line-height:12.5px;color:#444;letter-spacing:-0.402px;">SmartArt</span>
<span class="t" id="t29" style="left:406.6px;top:119.00px;font-size:12.5px;line-height:12.5px;color:#444;letter-spacing:-0.645px;">Chart</span>
<span class="t" id="t30" style="left:521px;top:82.00px;font-size:12.5px;line-height:12.5px;color:#444;letter-spacing:-0.433px;">Get Add-ins</span>
<span class="t" id="t31" style="left:521px;top:113.00px;font-size:12.5px;line-height:12.5px;color:#444;letter-spacing:-0.149px;">My Add-ins</span>
<span class="t" id="t32" style="left:623.4px;top:107.00px;font-size:12.5px;line-height:12.5px;color:#222;letter-spacing:-0.318px;">Zoom</span>
<span class="t" id="t33" style="left:670.5px;top:107.00px;font-size:12.5px;line-height:12.5px;color:#a6a6a6;letter-spacing:-0.479px;">Link</span>
<span class="t" id="t34" style="left:705.6px;top:107.00px;font-size:12.5px;line-height:12.5px;color:#a6a6a6;letter-spacing:-0.090px;">Action</span>
<span class="t" id="t35" style="left:762.4px;top:107.00px;font-size:12.5px;line-height:12.5px;color:#444;letter-spacing:-0.031px;">Comment</span>
<span class="t" id="t36" style="left:846px;top:107.00px;font-size:12.5px;line-height:12.5px;color:#444;letter-spacing:-0.979px;">Text</span>
<span class="t" id="t37" style="left:846.7px;top:123.00px;font-size:12.5px;line-height:12.5px;color:#444;letter-spacing:-1.773px;">Box</span>
<span class="t" id="t38" style="left:884.2px;top:107.00px;font-size:12.5px;line-height:12.5px;color:#444;letter-spacing:-0.560px;">Header</span>
<span class="t" id="t39" style="left:879.3px;top:123.00px;font-size:12.5px;line-height:12.5px;color:#444;letter-spacing:-0.220px;">&amp; Footer</span>
<span class="t" id="t40" style="left:931.3px;top:107.00px;font-size:12.5px;line-height:12.5px;color:#444;letter-spacing:-0.154px;">WordArt</span>
<span class="t" id="t41" style="left:13.4px;top:146.00px;font-size:12.5px;line-height:12.5px;color:#555;letter-spacing:-0.949px;">Slides</span>
<span class="t" id="t42" style="left:71px;top:146.00px;font-size:12.5px;line-height:12.5px;color:#555;letter-spacing:-1.128px;">Tables</span>
<span class="t" id="t43" style="left:185.7px;top:146.00px;font-size:12.5px;line-height:12.5px;color:#555;letter-spacing:-1.280px;">Images</span>
<span class="t" id="t44" style="left:360px;top:146.00px;font-size:12.5px;line-height:12.5px;color:#555;letter-spacing:-0.236px;">Illustrations</span>
<span class="t" id="t45" style="left:529px;top:146.00px;font-size:12.5px;line-height:12.5px;color:#555;letter-spacing:-0.482px;">Add-ins</span>
<span class="t" id="t46" style="left:667.7px;top:146.00px;font-size:12.5px;line-height:12.5px;color:#555;letter-spacing:-1.047px;">Links</span>
<span class="t" id="t47" style="left:762.4px;top:146.00px;font-size:12.5px;line-height:12.5px;color:#555;letter-spacing:-1.034px;">Comments</span>
<span class="t" id="t48" style="left:908.3px;top:146.00px;font-size:12.5px;line-height:12.5px;color:#555;letter-spacing:-1.579px;">Text</span>
<span class="t" id="t49" style="left:13.3px;top:178.00px;font-size:14.5px;line-height:14.5px;color:#555;letter-spacing:0.000px;">1</span>
<span class="t" id="t50" style="left:12.3px;top:319.00px;font-size:14.5px;line-height:14.5px;color:#d2532f;letter-spacing:0.000px;">2</span>
<span class="t" id="t51" style="left:446px;top:225.00px;font-size:35px;line-height:35px;color:#0d0d0d;letter-spacing:-0.413px;">2018 Top-5 Home Run Leaders</span>
<span class="t" id="t52" style="left:444px;top:303.00px;font-size:26px;line-height:26px;color:#0d0d0d;letter-spacing:0.000px;">•</span>
<span class="t" id="t53" style="left:461px;top:306.00px;font-size:21px;line-height:21px;color:#0d0d0d;letter-spacing:0.310px;">Khris Davis</span>
<span class="t" id="t54" style="left:444px;top:339.00px;font-size:26px;line-height:26px;color:#0d0d0d;letter-spacing:0.000px;">•</span>
<span class="t" id="t55" style="left:459.5px;top:343.00px;font-size:21px;line-height:21px;color:#0d0d0d;letter-spacing:0.816px;">J.D. Martinez</span>
<span class="t" id="t56" style="left:444px;top:376.00px;font-size:26px;line-height:26px;color:#0d0d0d;letter-spacing:0.000px;">•</span>
<span class="t" id="t57" style="left:459.5px;top:379.00px;font-size:21px;line-height:21px;color:#0d0d0d;letter-spacing:0.531px;">Joey Gallo</span>
<span class="t" id="t58" style="left:444px;top:412.00px;font-size:26px;line-height:26px;color:#0d0d0d;letter-spacing:0.000px;">•</span>
<span class="t" id="t59" style="left:461px;top:415.00px;font-size:21px;line-height:21px;color:#0d0d0d;letter-spacing:1.252px;">Mike Trout</span>
<span class="t" id="t60" style="left:444px;top:448.00px;font-size:26px;line-height:26px;color:#0d0d0d;letter-spacing:0.000px;">•</span>
<span class="t" id="t61" style="left:459.5px;top:451.00px;font-size:21px;line-height:21px;color:#0d0d0d;letter-spacing:0.366px;">Jose Ramirez</span>
<span class="t" id="t62" style="left:52.5px;top:336.00px;font-size:9px;line-height:9px;color:#000;letter-spacing:-0.534px;font-weight:bold;">2018 Top-5 Home Run Leaders</span>
<span class="t" id="t63" style="left:51.7px;top:354.00px;font-size:7.4px;line-height:7.4px;color:#444;letter-spacing:0.000px;">•</span>
<span class="t" id="t64" style="left:56px;top:356.00px;font-size:5.4px;line-height:5.4px;color:#333;letter-spacing:-0.027px;">Khris Davis</span>
<span class="t" id="t65" style="left:51.7px;top:363.00px;font-size:7.4px;line-height:7.4px;color:#444;letter-spacing:0.000px;">•</span>
<span class="t" id="t66" style="left:56px;top:365.00px;font-size:5.4px;line-height:5.4px;color:#333;letter-spacing:0.103px;">J.D. Martinez</span>
<span class="t" id="t67" style="left:51.7px;top:372.00px;font-size:7.4px;line-height:7.4px;color:#444;letter-spacing:0.000px;">•</span>
<span class="t" id="t68" style="left:56px;top:374.00px;font-size:5.4px;line-height:5.4px;color:#333;letter-spacing:0.003px;">Joey Gallo</span>
<span class="t" id="t69" style="left:51.7px;top:381.00px;font-size:7.4px;line-height:7.4px;color:#444;letter-spacing:0.000px;">•</span>
<span class="t" id="t70" style="left:56px;top:383.00px;font-size:5.4px;line-height:5.4px;color:#333;letter-spacing:0.203px;">Mike Trout</span>
<span class="t" id="t71" style="left:51.7px;top:390.00px;font-size:7.4px;line-height:7.4px;color:#444;letter-spacing:0.000px;">•</span>
<span class="t" id="t72" style="left:56px;top:392.00px;font-size:5.4px;line-height:5.4px;color:#333;letter-spacing:-0.041px;">Jose Ramirez</span>
</body>
</html>
